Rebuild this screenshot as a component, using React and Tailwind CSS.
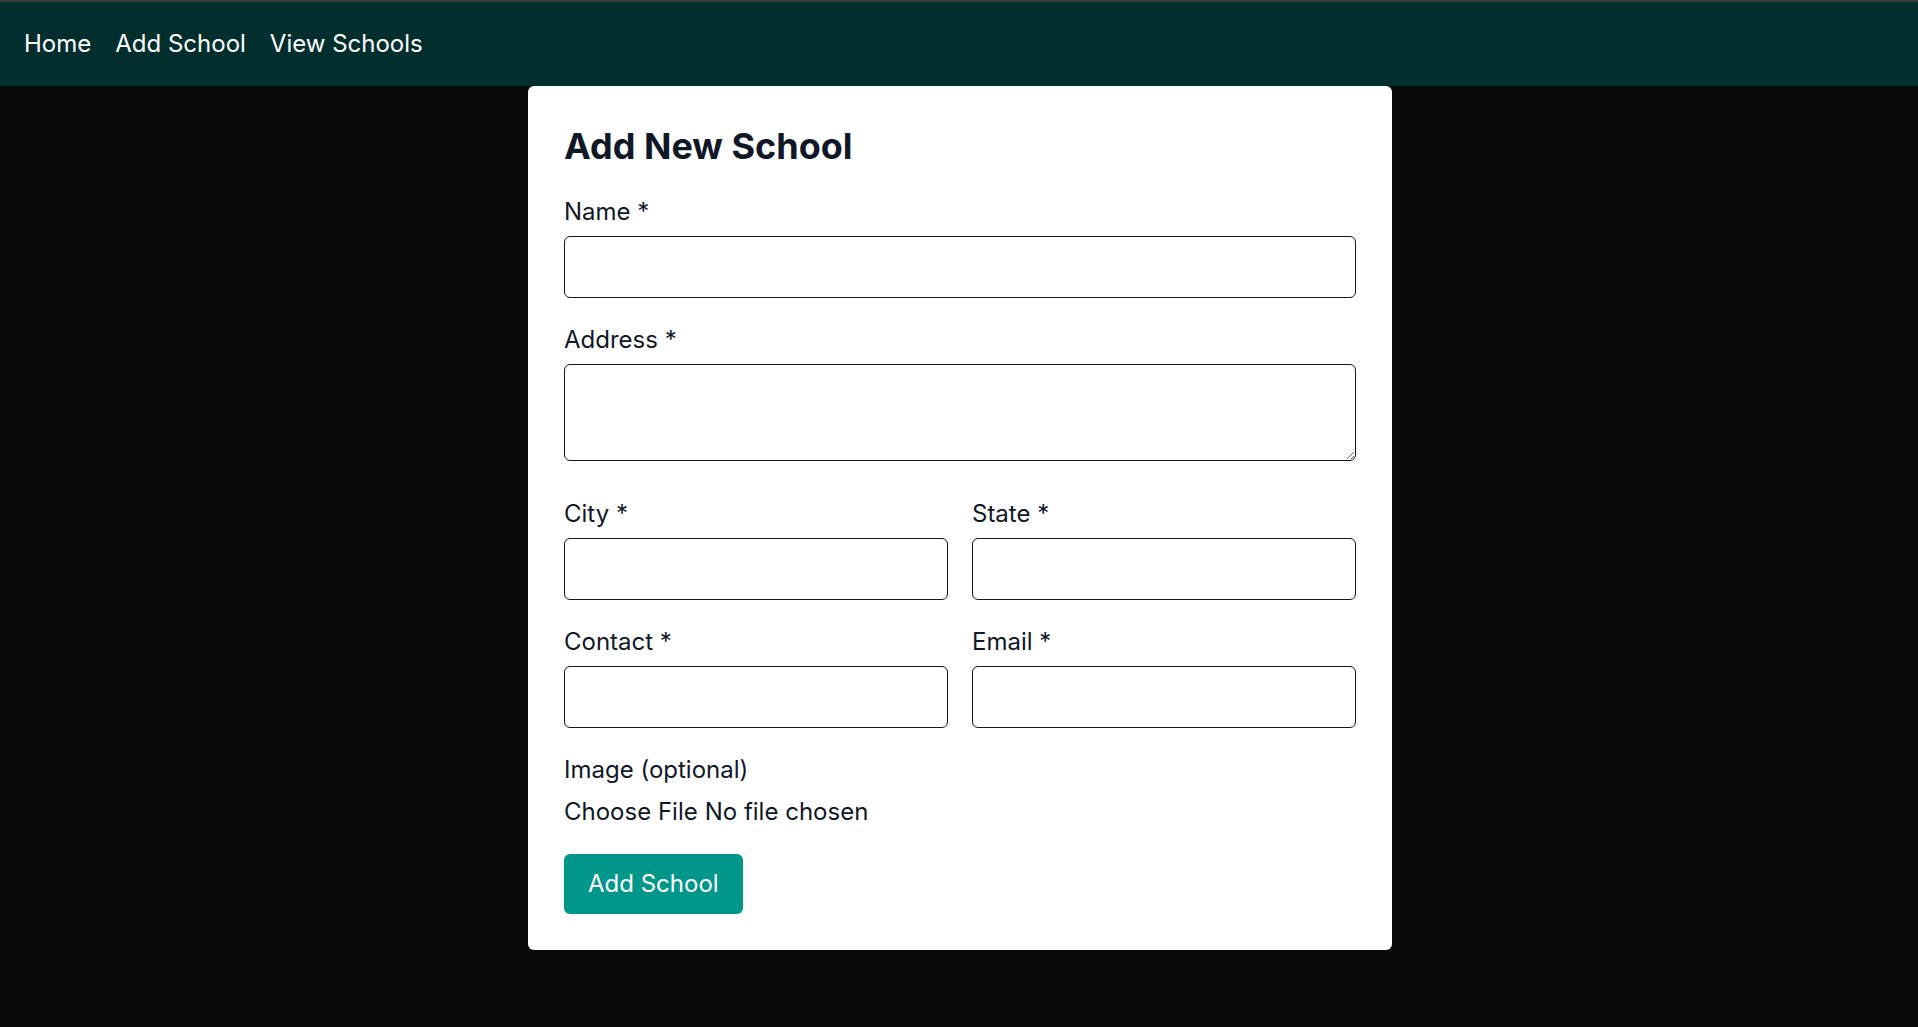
import React, { useState } from 'react';

const fieldClass =
  "block w-full h-[62px] rounded-[6px] border border-[#101828] bg-white px-[18px] text-[24px] text-[#101828] outline-none";

const Field = ({ label, name, value, onChange, type = "text" }) => (
  <div>
    <label className="block text-[24px] leading-[36px] mb-[6px]">{label}</label>
    <input type={type} name={name} value={value} onChange={onChange} className={fieldClass} />
  </div>
);

const App = () => {
  const [form, setForm] = useState({
    name: "",
    address: "",
    city: "",
    state: "",
    contact: "",
    email: ""
  });

  const handleChange = (e) => {
    const { name, value } = e.target;
    setForm(prev => ({ ...prev, [name]: value }));
  };

  return (
    <div className="min-h-[1027px] bg-[#0a0a0a] font-['Inter',sans-serif]">
      {/* Navbar */}
      <nav className="border-t-2 border-[#3a3a3a] bg-[#022f2e] px-[24px] py-[24px]">
        <div className="flex gap-[24px] text-[24px] leading-[36px] text-white">
          <a href="#">Home</a>
          <a href="#">Add School</a>
          <a href="#">View Schools</a>
        </div>
      </nav>

      <div className="flex justify-center pl-[2px]">
        <div className="w-[864px] rounded-[6px] bg-white p-[36px] text-[#101828]">
          <h1 className="mb-[24px] text-[36px] font-bold leading-[48px]">Add New School</h1>

          <form className="flex flex-col gap-[24px]" onSubmit={e => e.preventDefault()}>
            <Field label="Name *" name="name" value={form.name} onChange={handleChange} />

            <div>
              <label className="block text-[24px] leading-[36px] mb-[6px]">Address *</label>
              <textarea
                name="address"
                value={form.address}
                onChange={handleChange}
                className="block h-[97px] w-full rounded-[6px] border border-[#101828] px-[18px] py-[12px] text-[24px] outline-none"
              />
            </div>

            <div className="mt-[11px] grid grid-cols-2 gap-[24px]">
              <Field label="City *" name="city" value={form.city} onChange={handleChange} />
              <Field label="State *" name="state" value={form.state} onChange={handleChange} />
            </div>

            <div className="grid grid-cols-2 gap-[24px]">
              <Field label="Contact *" name="contact" value={form.contact} onChange={handleChange} />
              <Field label="Email *" name="email" type="email" value={form.email} onChange={handleChange} />
            </div>

            <div>
              <label className="block text-[24px] leading-[36px] mb-[6px]">Image (optional)</label>
              <input type="file" className="block text-[24px] leading-[36px] file:mr-[7px]" />
            </div>

            <div>
              <button
                type="submit"
                className="rounded-[6px] bg-[#009689] px-[24px] py-[12px] text-[24px] leading-[36px] text-white"
              >
                Add School
              </button>
            </div>
          </form>
        </div>
      </div>
    </div>
  );
};

export default App;
